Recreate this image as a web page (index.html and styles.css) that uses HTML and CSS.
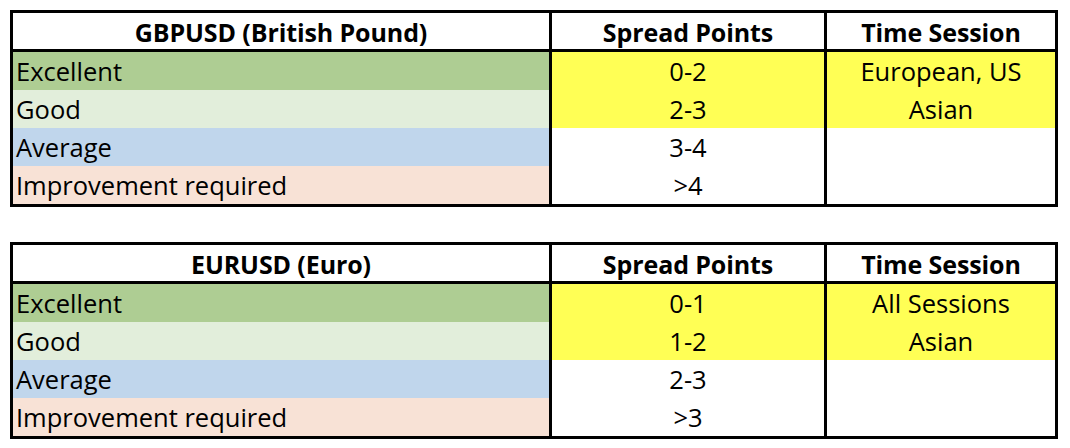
FILE: index.html
```html
<!DOCTYPE html>
<html>
<head>
<meta charset="utf-8">
<link rel="stylesheet" href="styles.css">
</head>
<body>
<div class="page">
  <div class="tbl">
    <div class="cell head">GBPUSD (British Pound)</div>
    <div class="cell head div">Spread Points</div>
    <div class="cell head div">Time Session</div>

    <div class="cell lab excellent">Excellent</div>
    <div class="cell val div hl">0-2</div>
    <div class="cell val div hl">European, US</div>

    <div class="cell lab good">Good</div>
    <div class="cell val div hl">2-3</div>
    <div class="cell val div hl">Asian</div>

    <div class="cell lab average">Average</div>
    <div class="cell val div">3-4</div>
    <div class="cell val div"></div>

    <div class="cell lab improve">Improvement required</div>
    <div class="cell val div">&gt;4</div>
    <div class="cell val div"></div>
  </div>

  <div class="tbl">
    <div class="cell head">EURUSD (Euro)</div>
    <div class="cell head div">Spread Points</div>
    <div class="cell head div">Time Session</div>

    <div class="cell lab excellent">Excellent</div>
    <div class="cell val div hl">0-1</div>
    <div class="cell val div hl">All Sessions</div>

    <div class="cell lab good">Good</div>
    <div class="cell val div hl">1-2</div>
    <div class="cell val div hl">Asian</div>

    <div class="cell lab average">Average</div>
    <div class="cell val div">2-3</div>
    <div class="cell val div"></div>

    <div class="cell lab improve">Improvement required</div>
    <div class="cell val div">&gt;3</div>
    <div class="cell val div"></div>
  </div>
</div>
</body>
</html>
```

FILE: styles.css
```css
html, body {
  margin: 0;
  padding: 0;
  background: #ffffff;
}

.page {
  padding: 10px 0 0 10px;
  display: flex;
  flex-direction: column;
  gap: 35px;
  font-family: "Open Sans", Lato, sans-serif;
  color: #000;
}

.tbl {
  display: grid;
  grid-template-columns: 536px 275px 231px;
  grid-template-rows: 39px 38px 38px 38px 38px;
  width: 1042px;
  border: 3px solid #000;
}

.cell {
  font-size: 25.5px;
  line-height: 38px;
  white-space: nowrap;
  overflow: hidden;
}

.head {
  font-size: 25px;
  font-weight: bold;
  text-align: center;
  line-height: 38px;
  border-bottom: 3px solid #000;
  background: #fff;
  letter-spacing: -0.1px;
}

.div {
  border-left: 3px solid #000;
}

.lab {
  padding-left: 3px;
}

.val {
  text-align: center;
  background: #fff;
}

.hl {
  background: #ffff55;
}

.excellent { background: #aecd93; }
.good { background: #e2eedb; }
.average { background: #c0d6ec; }
.improve { background: #f8e2d6; }
```
